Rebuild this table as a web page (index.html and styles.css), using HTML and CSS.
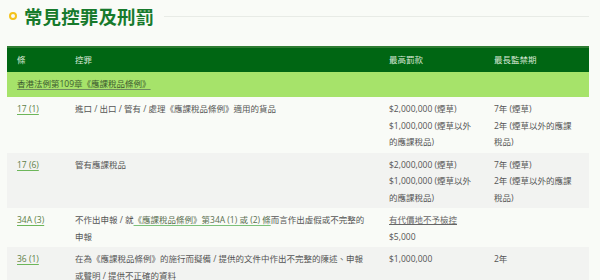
FILE: index.html
```html
<!DOCTYPE html>
<html lang="zh-Hant">
<head>
<meta charset="utf-8">
<link rel="stylesheet" href="styles.css">
</head>
<body>
<div class="page">
  <div class="title-row">
    <span class="bullet"></span>
    <h2 class="title">常見控罪及刑罰</h2>
    <span class="rule"></span>
  </div>
  <table class="tbl">
    <colgroup>
      <col class="c1"><col class="c2"><col class="c3"><col class="c4">
    </colgroup>
    <thead>
      <tr class="head"><th>條</th><th>控罪</th><th>最高罰款</th><th>最長監禁期</th></tr>
    </thead>
    <tbody>
      <tr class="sub"><td colspan="4"><a class="sublink">香港法例第109章《應課稅品條例》</a></td></tr>
      <tr>
        <td><a class="sec">17 (1)</a></td>
        <td>進口 / 出口 / 管有 / 處理《應課稅品條例》適用的貨品</td>
        <td>$2,000,000 (煙草)<br>$1,000,000 (煙草以外的應課稅品)</td>
        <td>7年 (煙草)<br>2年 (煙草以外的應課稅品)</td>
      </tr>
      <tr class="alt">
        <td><a class="sec">17 (6)</a></td>
        <td>管有應課稅品</td>
        <td>$2,000,000 (煙草)<br>$1,000,000 (煙草以外的應課稅品)</td>
        <td>7年 (煙草)<br>2年 (煙草以外的應課稅品)</td>
      </tr>
      <tr>
        <td><a class="sec">34A (3)</a></td>
        <td>不作出申報 / 就<a class="inl">《應課稅品條例》第34A (1) 或 (2) 條</a>而言作出虛假或不完整的申報</td>
        <td><a class="plain">有代價地不予檢控</a><br>$5,000</td>
        <td></td>
      </tr>
      <tr class="alt">
        <td><a class="sec">36 (1)</a></td>
        <td>在為《應課稅品條例》的施行而擬備 / 提供的文件中作出不完整的陳述、申報或聲明 / 提供不正確的資料</td>
        <td>$1,000,000</td>
        <td>2年</td>
      </tr>
    </tbody>
  </table>
</div>
</body>
</html>
```

FILE: styles.css
```css
html, body {
  margin: 0;
  padding: 0;
  background: #f9fbf7;
}
body {
  font-family: "Open Sans", "Noto Sans CJK TC", sans-serif;
  color: #555;
}
.page {
  padding: 3px 11px 0 7px;
}
.title-row {
  display: flex;
  align-items: center;
  height: 26px;
}
.bullet {
  width: 4px;
  height: 4px;
  border: 2px solid #f4c21b;
  border-radius: 50%;
  margin: 0 7px 0 2px;
}
.title {
  margin: 0;
  font-family: "Noto Sans CJK TC", sans-serif;
  font-size: 18.5px;
  font-weight: 700;
  color: #177a2c;
  line-height: 26px;
  letter-spacing: 0.1px;
}
.rule {
  flex: 1;
  height: 1px;
  background: #e8ebe6;
  margin-left: 10px;
}
.tbl {
  margin-top: 17px;
  width: 582px;
  border-collapse: collapse;
  table-layout: fixed;
  font-size: 8.5px;
  line-height: 16.5px;
}
.c1 { width: 58px; }
.c2 { width: 314px; }
.c3 { width: 105px; }
.c4 { width: 105px; }
.tbl th, .tbl td {
  text-align: left;
  vertical-align: top;
  padding: 4px 10px 2px 10px;
}
.head {
  background: #006613;
  border-top: 2px solid #2f7d33;
}
.head th {
  color: #d9e8d6;
  font-weight: 400;
  height: 24px;
  padding: 0 10px;
  vertical-align: middle;
}
.sub td {
  background: #a6e36a;
  height: 25px;
  padding: 0 10px;
  vertical-align: middle;
}
.sublink {
  color: #3c5a2e;
  text-decoration: underline;
  text-decoration-color: #6f8a5f;
  text-underline-offset: 2px;
}
.alt td {
  background: #f2f3f1;
}
.sec {
  color: #5c7f48;
  text-decoration: underline;
  text-decoration-color: #6db65a;
  text-underline-offset: 2px;
}
.inl {
  color: #5a6e50;
  text-decoration: underline;
  text-decoration-color: #7cc17a;
  text-underline-offset: 2px;
}
.plain {
  color: #666;
  text-decoration: underline;
  text-underline-offset: 1px;
}
```
